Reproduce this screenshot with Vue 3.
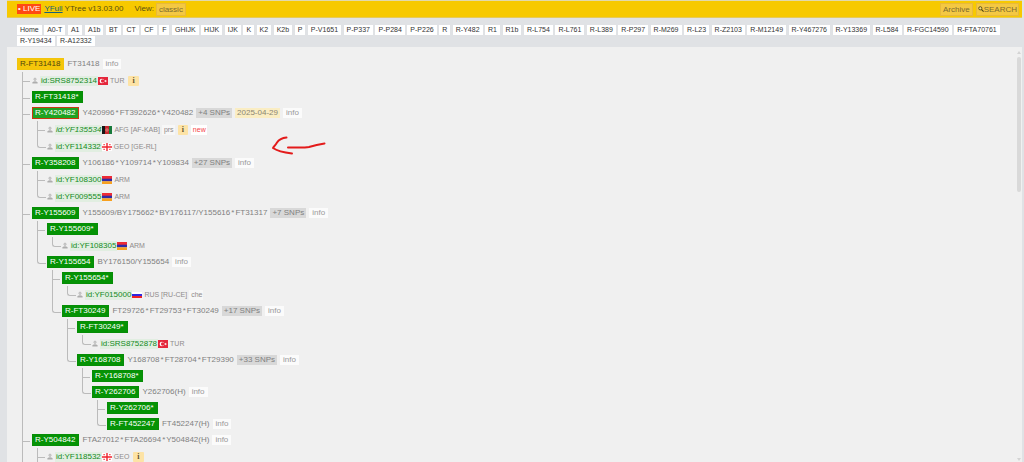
<script setup>
import { computed } from 'vue';

const haplogroups = [
  'Home', 'A0-T', 'A1', 'A1b', 'BT', 'CT', 'CF', 'F', 'GHIJK', 'HIJK', 'IJK', 'K', 'K2', 'K2b', 'P',
  'P-V1651', 'P-P337', 'P-P284', 'P-P226', 'R', 'R-Y482', 'R1', 'R1b', 'R-L754', 'R-L761', 'R-L389',
  'R-P297', 'R-M269', 'R-L23', 'R-Z2103', 'R-M12149', 'R-Y467276', 'R-Y13369', 'R-L584',
  'R-FGC14590', 'R-FTA70761', 'R-Y19434', 'R-A12332'
];

// Tree in display order, nesting is given by depth
const nodes = [
  { depth: 0, name: 'R-FT31418', snps: ['FT31418'], info: true, root: true },
  { depth: 1, sample: 'id:SRS8752314', flag: 'tr', country: 'TUR', note: true },
  { depth: 1, name: 'R-FT31418*' },
  { depth: 1, name: 'R-Y420482', snps: ['Y420996', 'FT392626', 'Y420482'], more: '+4 SNPs', date: '2025-04-29', info: true, updated: true },
  { depth: 2, sample: 'id:YF135534', flag: 'af', country: 'AFG [AF-KAB]', lang: 'prs', note: true, fresh: true },
  { depth: 2, sample: 'id:YF114332', flag: 'ge', country: 'GEO [GE-RL]' },
  { depth: 1, name: 'R-Y358208', snps: ['Y106186', 'Y109714', 'Y109834'], more: '+27 SNPs', info: true },
  { depth: 2, sample: 'id:YF108300', flag: 'am', country: 'ARM' },
  { depth: 2, sample: 'id:YF009555', flag: 'am', country: 'ARM' },
  { depth: 1, name: 'R-Y155609', snps: ['Y155609/BY175662', 'BY176117/Y155616', 'FT31317'], more: '+7 SNPs', info: true },
  { depth: 2, name: 'R-Y155609*' },
  { depth: 3, sample: 'id:YF108305', flag: 'am', country: 'ARM' },
  { depth: 2, name: 'R-Y155654', snps: ['BY176150/Y155654'], info: true },
  { depth: 3, name: 'R-Y155654*' },
  { depth: 4, sample: 'id:YF015000', flag: 'ru', country: 'RUS [RU-CE]', lang: 'che' },
  { depth: 3, name: 'R-FT30249', snps: ['FT29726', 'FT29753', 'FT30249'], more: '+17 SNPs', info: true },
  { depth: 4, name: 'R-FT30249*' },
  { depth: 5, sample: 'id:SRS8752878', flag: 'tr', country: 'TUR' },
  { depth: 4, name: 'R-Y168708', snps: ['Y168708', 'FT28704', 'FT29390'], more: '+33 SNPs', info: true },
  { depth: 5, name: 'R-Y168708*' },
  { depth: 5, name: 'R-Y262706', snps: ['Y262706(H)'], info: true },
  { depth: 6, name: 'R-Y262706*' },
  { depth: 6, name: 'R-FT452247', snps: ['FT452247(H)'], info: true },
  { depth: 1, name: 'R-Y504842', snps: ['FTA27012', 'FTA26694', 'Y504842(H)'], info: true },
  { depth: 2, sample: 'id:YF118532', flag: 'ge', country: 'GEO', note: true }
];

// Levels that go on below the last loaded row
const openLevels = [1, 2];

// Does the given level have another sibling after this row?
const continues = (index, level) => {
  for (let i = index + 1; i < nodes.length; i++) {
    if (nodes[i].depth === level) return true;
    if (nodes[i].depth < level) return false;
  }
  return openLevels.includes(level);
};

const rows = computed(() => nodes.map((node, index) => {
  const guides = [];
  for (let level = 1; level <= node.depth; level++) {
    const more = continues(index, level);
    if (level === node.depth) guides.push(more ? 'tee' : 'elbow');
    else guides.push(more ? 'line' : 'blank');
  }
  return { ...node, guides };
}));
</script>

<template>
  <div class="page">
    <header class="topbar">
      <span class="live">• LIVE</span>
      <a href="#" class="brand">YFull</a>
      <span class="version">YTree v13.03.00</span>
      <span class="view">View:</span>
      <button type="button" class="tool">classic</button>
      <span class="spacer"></span>
      <button type="button" class="tool">Archive</button>
      <button type="button" class="tool search">
        <svg width="6" height="6" viewBox="0 0 6 6" aria-hidden="true">
          <circle cx="2.3" cy="2.3" r="1.6" fill="#f4dc86" stroke="#4d430f" stroke-width="0.9" />
          <path d="M3.5 3.5L5.6 5.6" stroke="#4d430f" stroke-width="1.1" />
        </svg>SEARCH
      </button>
    </header>

    <nav class="crumbs">
      <template v-for="group in haplogroups" :key="group"><a href="#">{{ group }}</a>{{ ' ' }}</template>
    </nav>

    <main class="panel">
      <ul class="tree">
        <li v-for="row in rows" :key="row.name || row.sample" class="row" :class="{ leaf: row.sample }">
          <span v-for="(guide, level) in row.guides" :key="level" class="guide" :class="guide"></span>

          <template v-if="row.name">
            <a href="#" class="clade" :class="{ root: row.root, updated: row.updated }">{{ row.name }}</a>
            <span v-if="row.snps" class="snps">
              <template v-for="(snp, i) in row.snps" :key="snp">
                <span v-if="i">*</span>
                <span>{{ snp }}</span>
              </template>
            </span>
            <span v-if="row.more" class="more">{{ row.more }}</span>
            <span v-if="row.date" class="date">{{ row.date }}</span>
            <a v-if="row.info" href="#" class="info">info</a>
          </template>

          <template v-else>
            <svg class="person" width="6" height="7" viewBox="0 0 6 7" aria-hidden="true">
              <circle cx="3" cy="2.2" r="1.1" fill="#ddd" stroke="#b0b0b0" stroke-width="0.8" />
              <path d="M3 3.4V4.6" stroke="#b8b8b8" stroke-width="1.4" />
              <path d="M0.400 6.400V5.200L1.600 4.600H4.400L5.600 5.200V6.400Z" fill="#adadad" />
            </svg>
            <span class="sample" :class="{ italic: row.fresh }">{{ row.sample }}</span>
            <svg class="flag" width="10" height="8" viewBox="0 0 10 8" aria-hidden="true">
              <template v-if="row.flag === 'tr'">
                <rect width="10" height="8" fill="#e5273c" />
                <circle cx="3.9" cy="4" r="2.3" fill="#fff" />
                <circle cx="4.6" cy="4" r="1.7" fill="#e5273c" />
                <path d="M6 4L7 3.6L7.2 2.7L7.8 3.5L8.8 3.4L8.2 4L8.8 4.7L7.8 4.6L7.2 5.4L7 4.4Z" fill="#fff" />
              </template>
              <template v-else-if="row.flag === 'af'">
                <rect width="10" height="8" fill="#c62a2f" />
                <rect width="3" height="8" fill="#161616" />
                <rect x="7" width="3" height="8" fill="#177a3b" />
                <circle cx="5" cy="4" r="1.2" fill="none" stroke="#e9b3b0" stroke-width="0.6" />
              </template>
              <template v-else-if="row.flag === 'ge'">
                <rect width="10" height="8" fill="#fff" />
                <path d="M4.300 0H5.700V3.300H10V4.700H5.700V8H4.300V4.700H0V3.300H4.300Z" fill="#f0222e" />
                <path d="M1.500 1H2.700V2.300H1.500ZM7.300 1H8.500V2.300H7.300ZM1.500 5.700H2.700V7H1.500ZM7.300 5.700H8.500V7H7.300Z" fill="#f0222e" />
              </template>
              <template v-else-if="row.flag === 'am'">
                <rect width="10" height="3" fill="#ee2b34" />
                <rect y="2.7" width="10" height="2.7" fill="#2e2aa5" />
                <rect y="5.3" width="10" height="2.7" fill="#f7a01f" />
              </template>
              <template v-else>
                <rect y="1" width="10" height="2" fill="#fff" />
                <rect y="3" width="10" height="2" fill="#3028e0" />
                <rect y="5" width="10" height="2" fill="#ee2426" />
              </template>
            </svg>
            <span class="country">{{ row.country }}</span>
            <span v-if="row.lang" class="lang">{{ row.lang }}</span>
            <span v-if="row.note" class="note">i</span>
            <span v-if="row.fresh" class="new">new</span>
          </template>
        </li>
      </ul>

      <div class="scrollbar" aria-hidden="true">
        <span class="arrow up"></span>
        <span class="thumb"></span>
        <span class="arrow down"></span>
      </div>

      <svg class="marker" width="56" height="20" viewBox="0 0 56 20" aria-hidden="true">
        <path d="M15.5 1.5C10 2 8 3.5 6 6.5C4.500 9 3 10.500 2 12C7 15.500 13 16.500 21 17.500" />
        <path d="M17 11.500C25 11.500 33 12 38 11C43 9.500 47 8.500 53.500 7.500" />
      </svg>
    </main>
  </div>
</template>

<style>
body {
  margin: 0;
  background: #e0e2e5;
}
</style>

<style scoped>
.page {
  display: flex;
  flex-direction: column;
  height: 100vh;
  box-sizing: border-box;
  padding: 0 2px 0 7px;
  overflow: hidden;
  font-family: "Liberation Sans", Arial, sans-serif;
  font-size: 8px;
  line-height: 10px;
}

a {
  color: inherit;
  text-decoration: none;
}

.topbar {
  display: flex;
  flex: none;
  align-items: center;
  height: 16px;
  padding: 0 3px 0 10px;
  background: #f7c900;
  border-top: 1px solid #e2d9ac;
  border-bottom: 1px solid #e6c95a;
  color: #5a4f10;
}

.live {
  padding: 0 1px;
  margin-right: 3px;
  background: #ff4a12;
  color: #fff;
}

.brand {
  margin-right: 2px;
  color: #17617a;
  text-decoration: underline;
}

.version {
  margin-right: 11px;
}

.view {
  margin-right: 2px;
}

.spacer {
  flex: 1;
}

.tool {
  padding: 0 2px;
  border: 1px solid #e8b93c;
  background: #f4c842;
  color: #7a6a30;
  font: inherit;
  line-height: 11px;
}

.tool + .tool {
  margin-left: 3px;
}

.search {
  display: flex;
  align-items: center;
  padding: 0 1px;
}

.crumbs {
  flex: none;
  padding: 7px 12px 0 10px;
  font-size: 9px;
  line-height: 11px;
}

.crumbs a {
  display: inline-block;
  padding: 0 3px;
  background: #fff;
  color: #333;
  font-size: 7px;
  line-height: 10px;
  vertical-align: top;
}

.panel {
  position: relative;
  display: flex;
  flex: 1;
  min-height: 0;
  background: #f0f0f0;
}

.tree {
  flex: 1;
  min-width: 0;
  margin: 0;
  padding: 9px 0 0 10px;
  overflow: hidden;
  list-style: none;
}

.row {
  display: flex;
  align-items: center;
  height: 16px;
  white-space: nowrap;
}

.leaf {
  height: 17px;
}

.guide {
  position: relative;
  flex: none;
  align-self: stretch;
  width: 15px;
}

.line::before,
.tee::before {
  content: "";
  position: absolute;
  top: 0;
  bottom: 0;
  left: 5px;
  border-left: 1px solid #bbb;
}

.tee::after,
.elbow::after {
  content: "";
  position: absolute;
  top: 0;
  left: 5px;
  width: 8px;
  height: 9px;
  border-bottom: 1px solid #bbb;
}

.elbow::after {
  border-left: 1px solid #bbb;
  border-bottom-left-radius: 3px;
}

.clade {
  padding: 0 3px 0 2px;
  border: 1px solid #078d07;
  background: #059305;
  color: #fff;
}

.clade.root {
  border-color: #f2c40c;
  background: #f5c60a;
  color: #4f450f;
}

.clade.updated {
  border-color: #c83a10;
  background: #1ea322;
}

.snps {
  display: flex;
  gap: 1px;
  margin-left: 3px;
  color: #808080;
}

.more,
.date,
.info {
  margin-left: 3px;
  padding: 0 2px;
}

.more {
  background: #d8d8d8;
  color: #808080;
}

.date {
  background: #faedc3;
  color: #8a8672;
}

.info {
  padding: 0 3px;
  background: #fbfbfb;
  color: #999;
}

.sample {
  margin-left: 2px;
  padding: 0 1px;
  background: #e1eee1;
  color: #128a1c;
}

.italic {
  font-style: italic;
}

.flag {
  flex: none;
}

.country,
.lang,
.new {
  padding: 0 1px 0 2px;
  color: #8f8b8b;
  font-size: 7px;
}

.lang,
.new {
  margin-left: 1px;
  background: #f7f7f7;
}

.new {
  margin-left: 3px;
  background: #fff;
  color: #f5444a;
}

.note {
  margin-left: 3px;
  padding: 0 4px;
  border-radius: 1px;
  background: #fde3a5;
  color: #5f5334;
  font-family: "Liberation Serif", serif;
  font-weight: bold;
}

.scrollbar {
  display: flex;
  flex: none;
  flex-direction: column;
  align-items: center;
  width: 7px;
  padding: 4px 0 1px;
}

.thumb {
  width: 4px;
  height: 33%;
  margin: 3px 0 auto;
  border-radius: 2px;
  background: #d9d9d9;
}

.arrow {
  border: 2px solid transparent;
}

.up {
  border-top-width: 0;
  border-bottom: 3px solid #d4d4d4;
}

.down {
  border-bottom-width: 0;
  border-top: 3px solid #d4d4d4;
}

.marker {
  position: absolute;
  top: 89px;
  left: 264px;
  fill: none;
  stroke: #e31b1b;
  stroke-width: 2;
  stroke-linecap: round;
  stroke-linejoin: round;
}
</style>
